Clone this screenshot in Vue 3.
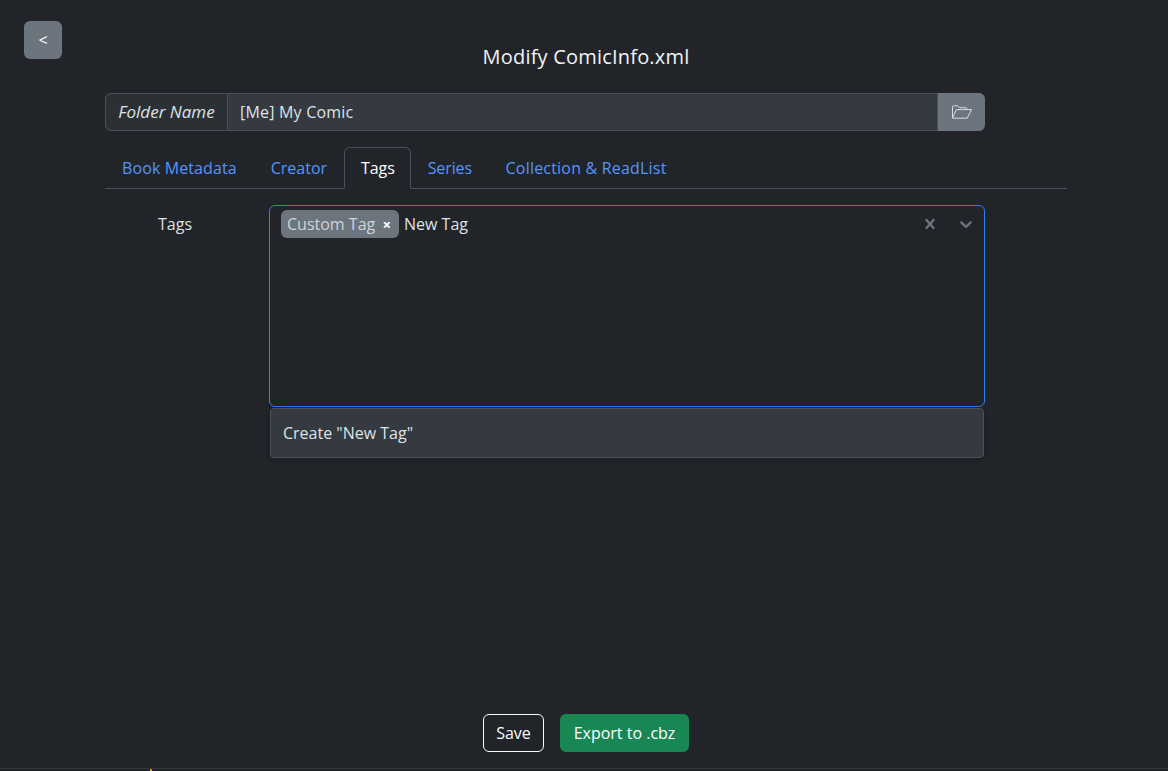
<script setup>
const tabs = ['Book Metadata', 'Creator', 'Tags', 'Series', 'Collection & ReadList']
</script>

<template>
  <div class="page">
    <header class="top">
      <button class="back">&lt;</button>
      <h1 class="title">Modify ComicInfo.xml</h1>
    </header>
    <div class="content">
      <div class="folder">
        <span class="folder-label">Folder Name</span>
        <span class="folder-value">[Me] My Comic</span>
        <button class="folder-btn" aria-label="Open folder">
          <svg width="20" height="14" viewBox="0 0 21 14" fill="none" stroke="currentColor" stroke-width="1">
            <path d="M0.5 13V1.5Q0.5 0.5 1.5 0.5H6L8 2.5H14.5Q15.5 2.5 15.5 3.5V4.5" />
            <path d="M4.5 4.5H20.5L16 13.5H0.5Z" stroke-linejoin="round" />
          </svg>
        </button>
      </div>
      <nav class="tabs">
        <a v-for="t in tabs" :key="t" class="tab" :class="{ active: t === 'Tags' }">{{ t }}</a>
      </nav>
      <div class="row">
        <label class="row-label">Tags</label>
        <div class="field">
          <div class="select">
            <div class="values">
              <span class="chip">Custom Tag<span class="chip-x">×</span></span>
              <span class="typed">New Tag</span>
            </div>
            <svg class="ind" width="20" height="20" viewBox="0 0 20 20" fill="currentColor"><path d="M14.348 14.849c-.469.469-1.229.469-1.697 0L10 11.819l-2.651 3.029c-.469.469-1.229.469-1.697 0-.469-.469-.469-1.229 0-1.697L8.41 10 5.651 6.849c-.469-.469-.469-1.229 0-1.697.469-.469 1.228-.469 1.697 0L10 8.183l2.651-3.031c.469-.469 1.228-.469 1.697 0 .469.469.469 1.229 0 1.697L11.59 10l2.758 3.152c.469.469.469 1.229 0 1.697z"/></svg>
            <svg class="ind" width="20" height="20" viewBox="0 0 20 20" fill="currentColor"><path d="M4.516 7.548c.436-.446 1.043-.481 1.576 0L10 11.295l3.908-3.747c.533-.481 1.141-.446 1.574 0 .436.445.408 1.197 0 1.615-.406.418-4.695 4.502-4.695 4.502-.217.223-.502.335-.787.335s-.57-.112-.789-.335c0 0-4.287-4.084-4.695-4.502s-.436-1.17 0-1.615z"/></svg>
          </div>
          <div class="menu">Create "New Tag"</div>
        </div>
      </div>
    </div>
    <div class="actions">
      <button class="save">Save</button>
      <button class="export">Export to .cbz</button>
    </div>
  </div>
  <footer class="strip"><span class="tick"></span></footer>
</template>

<style>
html, body { margin: 0; background: #212529; overflow: hidden; }
</style>

<style scoped>
.page {
  position: relative;
  box-sizing: border-box;
  width: 1168px;
  height: 768px;
  background: #212529;
  color: #dee2e6;
  font-family: "Open Sans", sans-serif;
  font-size: 16px;
  line-height: 24px;
}
.strip {
  height: 3px; background: #212529; border-top: 1px solid #343a40; box-sizing: border-box;
  padding-left: 150px; display: flex;
}
.tick { width: 2px; background: #c99a2e; }
button { font-family: inherit; font-size: 16px; line-height: 24px; cursor: pointer; }
.top { padding: 21px 24px 0; height: 72px; box-sizing: border-box; display: flex; }
.back {
  width: 38px; height: 38px; padding: 0; border: 0; border-radius: 6px;
  background: #6c757d; color: #fff;
}
.title {
  margin: 21px 0 0; flex: 1; padding-right: 34px; text-align: center;
  font-size: 20px; font-weight: 400; line-height: 30px; color: #f1f3f5; letter-spacing: .2px;
}
.content { padding: 21px 101px 0 105px; }
.folder { display: flex; width: 880px; height: 38px; box-sizing: border-box; }
.folder-label {
  width: 122px; box-sizing: border-box; flex: none; border: 1px solid #495057; border-right: 0;
  border-radius: 6px 0 0 6px; background: #2b3035; font-style: italic; text-align: center;
  line-height: 36px; color: #dee2e6; font-size: 17px;
}
.folder-value {
  flex: 1; border: 1px solid #495057; background: #343a40; padding-left: 12px; line-height: 36px; letter-spacing: .2px;
}
.folder-btn {
  width: 47px; flex: none; border: 0; border-radius: 0 6px 6px 0; background: #6c757d; color: #dfe3e6;
  display: flex; align-items: center; justify-content: center; padding: 0;
}
.tabs {
  display: flex; margin-top: 16px; height: 42px; box-sizing: border-box; border-bottom: 1px solid #495057;
}
.tab {
  box-sizing: border-box; height: 42px; padding: 8px 16px; border: 1px solid transparent;
  border-radius: 6px 6px 0 0; color: #5596fc;
}
.tab:first-child { letter-spacing: .1px; }
.tab:nth-child(3) { padding-right: 15px; letter-spacing: -.1px; }
.tab:nth-child(4) { letter-spacing: -.1px; padding-right: 15.5px; }
.tab:last-child { letter-spacing: .2px; }
.tab.active {
  color: #fff; background: #212529; border-color: #495057 #495057 #212529;
}
.row { display: flex; margin-top: 16px; }
.row-label { width: 140px; padding-top: 7px; text-align: center; box-sizing: border-box; margin-right: 24px; }
.field { width: 716px; }
.select {
  box-sizing: border-box; height: 202px; border: 1px solid #2f7cf0; border-radius: 6px;
  display: flex; align-items: flex-start; padding: 4px 8px 0 11px; color: #6c757d;
}
.values { flex: 1; display: flex; align-items: center; gap: 5px; color: #dee2e6; }
.chip {
  box-sizing: border-box; display: inline-flex; align-items: center; justify-content: space-between;
  width: 118px; height: 28px; padding: 0 8px 0 6px; border-radius: 6px;
  background: #6c757d; color: #ced4da;
}
.chip-x { color: #fff; font-weight: 700; font-size: 15px; }
.ind { margin: 4px 0 0 16px; }
.menu {
  box-sizing: border-box; margin: 1px 1px 0; height: 50px; background: #343a40; border: 1px solid #495057;
  border-radius: 4px; padding: 12px; line-height: 24px; box-shadow: 0 2px 6px rgba(0,0,0,.2);
}
.actions {
  position: absolute; left: 4px; right: 0; top: 714px; display: flex; justify-content: center; gap: 16px;
}
.save {
  width: 61px; height: 38px; padding: 0; border: 1px solid #f8f9fa; border-radius: 6px; background: transparent; color: #f8f9fa;
}
.export {
  width: 129px; height: 38px; padding: 0; border: 0; border-radius: 6px; background: #198754; color: #fff;
}
</style>
